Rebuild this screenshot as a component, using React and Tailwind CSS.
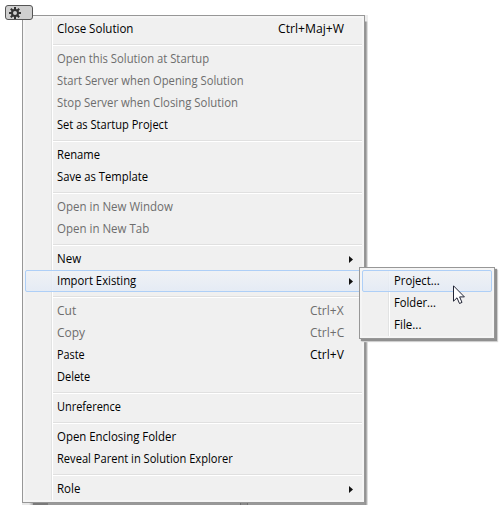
import { useLayoutEffect, useRef, useState } from 'react';

const groups = [
  [{ t: 'Close Solution', w: 76, k: 'Ctrl+Maj+W', kw: 66 }],
  [
    { t: 'Open this Solution at Startup', w: 152, off: true },
    { t: 'Start Server when Opening Solution', w: 187, off: true },
    { t: 'Stop Server when Closing Solution', w: 181, off: true },
    { t: 'Set as Startup Project', w: 111 },
  ],
  [{ t: 'Rename', w: 43 }, { t: 'Save as Template', w: 91 }],
  [{ t: 'Open in New Window', w: 116, off: true }, { t: 'Open in New Tab', w: 92, off: true }],
  [{ t: 'New', w: 24, sub: true }, { t: 'Import Existing', w: 79, sub: true, hot: true }],
  [
    { t: 'Cut', w: 19, off: true, k: 'Ctrl+X', kw: 34 },
    { t: 'Copy', w: 28, off: true, k: 'Ctrl+C', kw: 34 },
    { t: 'Paste', w: 28, k: 'Ctrl+V', kw: 34 },
    { t: 'Delete', w: 33 },
  ],
  [{ t: 'Unreference', w: 64 }],
  [{ t: 'Open Enclosing Folder', w: 119 }, { t: 'Reveal Parent in Solution Explorer', w: 176 }],
  [{ t: 'Role', w: 23, sub: true }],
];

const subItems = [
  { t: 'Project...', w: 46, hot: true },
  { t: 'Folder...', w: 42 },
  { t: 'File...', w: 27 },
];

function Label({ text, width }) {
  const ref = useRef(null);
  const [scale, setScale] = useState(1);
  useLayoutEffect(() => {
    setScale(width / ref.current.offsetWidth);
  }, [width]);
  return (
    <span className="block whitespace-nowrap" style={{ width }}>
      <span ref={ref} className="inline-block origin-left leading-[20px]" style={{ transform: `scaleX(${scale})` }}>
        {text}
      </span>
    </span>
  );
}

function Row({ item }) {
  return (
    <li
      className={
        'flex h-[22px] items-center rounded-[2px] border pr-2 pl-[31px] ' +
        (item.hot ? 'border-[#aecff7] bg-linear-to-b from-[#eff2f6]/80 to-[#e2eaf6]/80 ' : 'border-transparent ') +
        (item.off ? 'text-[#6d6d6d]' : 'text-black')
      }
    >
      <span className="grow"><Label text={item.t} width={item.w} /></span>
      {item.k && <span className="pr-[9px]"><Label text={item.k} width={item.kw} /></span>}
      {item.sub && (
        <svg className="h-[7px] w-[4px]" viewBox="0 0 4 7">
          <path d="M0 0L4 3.5L0 7Z" fill="#111" />
        </svg>
      )}
    </li>
  );
}

function Panel({ className, children }) {
  return (
    <div className={'border border-[#979797] bg-[#f5f5f5] p-[2px] ' + className}>
      <div className="h-full bg-[#f0f0f0] bg-[linear-gradient(90deg,transparent_26px,#e2e3e3_26px,#e2e3e3_27px,#fff_27px,#fff_28px,transparent_28px)]">
        {children}
      </div>
    </div>
  );
}

export default function App() {
  return (
    <main className="relative h-[510px] overflow-hidden bg-white pt-[15px] pl-[22px] font-['Open_Sans','Noto_Sans',sans-serif] text-[12px]">
      <div className="absolute top-[5px] left-[5px] flex h-[15px] w-[28px] rounded-[3px] border border-[#555] bg-[#cfcfcf] pt-px pl-[3px]">
        <svg className="h-[12px] w-[12px]" viewBox="-6 -6 12 12" fill="none" stroke="#333">
          <circle r="3" strokeWidth="2" />
          <path d="M0-6V-3M0 6V3M-6 0H-3M6 0H3M-4.2-4.2L-2-2M4.2 4.2L2 2M-4.2 4.2L-2 2M4.2-4.2L2-2" strokeWidth="2" />
        </svg>
      </div>
      <div className="h-[490px] w-[346px] bg-[linear-gradient(90deg,#e8e8e8_7px,#999_12px)]">
        <div className="h-full bg-[linear-gradient(90deg,transparent_11px,#7a7a7a_11px,#7a7a7a_26px,transparent_26px,transparent_218px,#707070_218px,#707070_219px,#8a8a8a_219px,#8a8a8a_225px,#707070_225px,#707070_226px,transparent_226px)]">
          <div className="h-full bg-[linear-gradient(90deg,transparent_343px,#939393_343px,#939393_344px,#b0b0b0_344px,#b0b0b0_345px,#dedede_345px)]">
            <div className="h-full bg-[linear-gradient(180deg,#ececec_6px,transparent_7px)] bg-size-[3px_100%] bg-right bg-no-repeat">
              <Panel className="h-[488px] w-[343px]">
                <div className="flex flex-col">
                  {groups.map((group, i) => (
                    <ul key={i} className="flex flex-col">
                      {i > 0 && (
                        <li className="flex h-2 flex-col pt-1 pl-7">
                          <hr className="border-[#e0e0e0]" />
                          <hr className="border-white" />
                        </li>
                      )}
                      {group.map((item) => <Row key={item.t} item={item} />)}
                    </ul>
                  ))}
                </div>
              </Panel>
            </div>
          </div>
        </div>
      </div>
      <Panel className="absolute top-[267px] left-[359px] h-[72px] w-[136px] shadow-[2px_2px_1px_#909090,3px_3px_1px_#ddd]">
        <ul className="flex flex-col">
          {subItems.map((item) => <Row key={item.t} item={item} />)}
        </ul>
      </Panel>
      <svg className="absolute top-[285px] left-[453px] h-[20px] w-[13px]" viewBox="0 0 13 20">
        <path d="M.5 .8V16.2L4 12.8L6.5 18.5L9 17.4L6.6 11.9H11.4Z" fill="white" stroke="#222536" />
      </svg>
    </main>
  );
}
